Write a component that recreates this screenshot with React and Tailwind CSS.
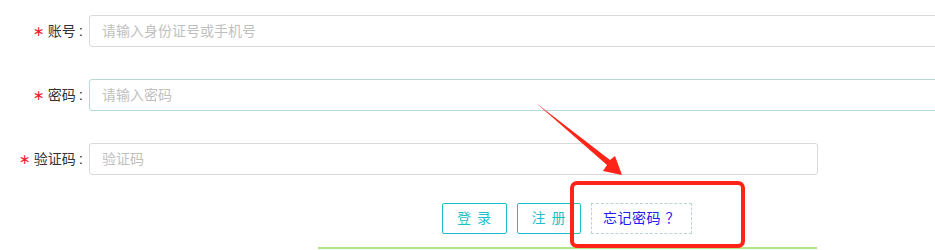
import React from "react";

const fields = [
    { label: "账号", placeholder: "请输入身份证号或手机号", wide: true, border: "border-[#d9d9d9]" },
    { label: "密码", placeholder: "请输入密码", wide: true, border: "border-[#b5d9d4]" },
    { label: "验证码", placeholder: "验证码", wide: false, border: "border-[#d9d9d9]" },
];

function App() {
    return (
        <div
            className="relative w-[935px] h-[250px] overflow-hidden bg-white text-[14px] text-[#333]"
            style={{ fontFamily: '"Liberation Sans", "Noto Sans CJK SC", sans-serif' }}
        >
            <div className="flex flex-col gap-[32px] pt-[15px]">
                {fields.map((f) => (
                    <div key={f.label} className="flex items-center h-[32px]">
                        <label className="w-[89px] shrink-0 flex justify-end items-center pr-[6px]">
                            <span className="text-[#f5222d] mr-[3px] text-[14px] font-['DejaVu_Sans']">∗</span>
                            <span>{f.label}</span>
                            <span className="ml-[3px] text-[15px]">:</span>
                        </label>
                        <input
                            type="text"
                            placeholder={f.placeholder}
                            className={`h-[32px] shrink-0 border ${f.border} rounded-[3px] px-[12px] outline-none placeholder:text-[#bfbfbf] ${f.wide ? "w-[900px]" : "w-[729px]"}`}
                        />
                    </div>
                ))}
            </div>

            <div className="flex items-center gap-[10px] ml-[442px] mt-[28px]">
                <button className="w-[65px] h-[31px] border border-[#1ec0c8] rounded-[2px] text-[#1ec0c8] tracking-[1px]">
                    登 录
                </button>
                <button className="w-[64px] h-[31px] border border-[#1ec0c8] rounded-[2px] text-[#1ec0c8] tracking-[1px]">
                    注 册
                </button>
                <button className="w-[101px] h-[31px] border border-dashed border-[#b9d4d4] text-[#1c1cf0] tracking-[0.5px]">
                    忘记密码 ？
                </button>
            </div>

            <div className="ml-[318px] mt-[13px] w-[499px] border-t-2 border-[#aee884]"></div>

            {/* annotation overlay */}
            <svg className="absolute inset-0 pointer-events-none" width="935" height="250">
                <polygon points="536,103 610,160 615,156 622,175 603,171 607,165" fill="#ff2418" />
                <rect x="572" y="183" width="171" height="63" rx="5" fill="none" stroke="#ff2418" strokeWidth="4" />
            </svg>
        </div>
    );
}

export default App;
